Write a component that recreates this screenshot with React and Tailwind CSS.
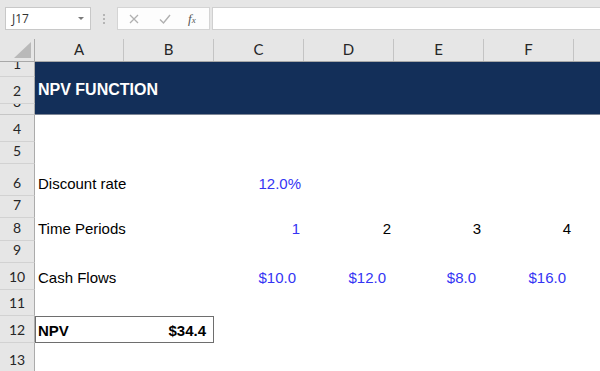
import { useState } from "react";

const COLS = ["A", "B", "C", "D", "E", "F", ""];

const ROWS = [
  { n: 1, h: "h-[15px]", banner: true },
  { n: 2, h: "h-[27px]", banner: true, title: "NPV FUNCTION" },
  { n: 3, h: "h-[11px]", banner: true, last: true },
  { n: 4, h: "h-[27px]" },
  { n: 5, h: "h-[22px]" },
  { n: 6, h: "h-[32px]", label: "Discount rate", vals: [{ t: "12.0%", blue: true, pr: "pr-[3px]" }] },
  { n: 7, h: "h-[22px]" },
  {
    n: 8,
    h: "h-[23px]",
    label: "Time Periods",
    vals: [
      { t: "1", blue: true, pr: "pr-[4px]" },
      { t: "2", pr: "pr-[3px]" },
      { t: "3", pr: "pr-[3px]" },
      { t: "4", pr: "pr-[3px]" },
    ],
  },
  { n: 9, h: "h-[22px]" },
  {
    n: 10,
    h: "h-[27px]",
    label: "Cash Flows",
    vals: [
      { t: "$10.0", blue: true, pr: "pr-[8px]" },
      { t: "$12.0", blue: true, pr: "pr-[8px]" },
      { t: "$8.0", blue: true, pr: "pr-[8px]" },
      { t: "$16.0", blue: true, pr: "pr-[8px]" },
    ],
  },
  { n: 11, h: "h-[26px]" },
  { n: 12, h: "h-[27px]", npv: true },
  { n: 13, h: "h-[30px]" },
];

function RowHead({ n, last }) {
  return (
    <div
      className={`flex items-end justify-center overflow-hidden bg-[#e6e6e6] border-r border-r-[#ababab] border-b ${
        last ? "border-b-[#c6c6c6]" : "border-b-[#d2d2d2]"
      } pb-[5px] font-['Lato',sans-serif] text-[14px] leading-none text-[#262626]`}
    >
      {n}
    </div>
  );
}

function Toolbar() {
  const [ref] = useState("J17");
  return (
    <div className="h-[39px] bg-[#e6e6e6] flex items-start pt-[7px] pl-[5px] font-['Open_Sans',sans-serif]">
      {/* name box */}
      <div className="w-[86px] h-[23px] bg-white border border-[#c8c8c8] flex items-center justify-between pl-[6px] pr-[6px]">
        <span className="text-[12px] text-[#333] leading-none">{ref}</span>
        <span className="w-0 h-0 border-l-[3px] border-r-[3px] border-t-[3px] border-l-transparent border-r-transparent border-t-[#7a7a7a]" />
      </div>
      {/* grip dots */}
      <div className="w-[26px] h-[23px] flex flex-col items-center justify-center gap-[2px]">
        <span className="w-[2px] h-[2px] bg-[#b5b5b5]" />
        <span className="w-[2px] h-[2px] bg-[#b5b5b5]" />
        <span className="w-[2px] h-[2px] bg-[#b5b5b5]" />
      </div>
      {/* cancel / enter / fx */}
      <div className="w-[93px] h-[23px] bg-[#fdfdfd] border border-[#d4d4d4] flex items-center pl-[10px] gap-[14px]">
        <svg width="12" height="12" viewBox="0 0 12 12" className="shrink-0">
          <path d="M2 2 L10 10 M10 2 L2 10" stroke="#b0b0b0" strokeWidth="1.3" fill="none" />
        </svg>
        <svg width="14" height="12" viewBox="0 0 14 12" className="shrink-0 ml-[4px]">
          <path d="M2 6.5 L5.5 10 L12 2" stroke="#b0b0b0" strokeWidth="1.4" fill="none" />
        </svg>
        <span className="font-['Liberation_Serif',serif] italic text-[13px] text-[#555] leading-none ml-[2px]">
          f<span className="text-[9px]">x</span>
        </span>
      </div>
      {/* formula input */}
      <div className="flex-1 h-[23px] ml-[2px] bg-white border border-[#d0d0d0] border-r-0" />
    </div>
  );
}

export default function App() {
  return (
    <div className="w-[600px] h-[371px] overflow-hidden bg-white font-['Liberation_Sans',Arial,sans-serif]">
      <Toolbar />

      {/* column headers */}
      <div className="grid grid-cols-[35px_89px_90px_90px_90px_90px_90px_1fr] h-[23px] bg-[#e6e6e6] border-b border-b-[#a8a8a8]">
        <div className="relative border-r border-r-[#ababab]">
          <div className="absolute right-[3px] bottom-[3px] w-0 h-0 border-l-[16px] border-t-[16px] border-l-transparent border-t-transparent border-r-0 border-b-[0px]">
          </div>
          <svg width="17" height="16" viewBox="0 0 17 16" className="absolute right-[3px] bottom-[3px]">
            <path d="M17 0 L17 16 L0 16 Z" fill="#b9b9b9" />
          </svg>
        </div>
        {COLS.map((c, i) => (
          <div
            key={i}
            className={`flex items-end justify-center pb-[4px] font-['Lato',sans-serif] text-[15px] leading-none text-[#262626] ${
              i < 6 ? "border-r border-r-[#c4c4c4]" : ""
            }`}
          >
            {c}
          </div>
        ))}
      </div>

      {/* sheet rows */}
      {ROWS.map((r) => (
        <div key={r.n} className={`grid grid-cols-[35px_89px_90px_90px_90px_90px_90px_1fr] ${r.h}`}>
          <RowHead n={r.n} last={r.last} />

          {r.banner ? (
            <div
              className={`col-span-7 bg-[#132f59] flex items-end pl-[3px] pb-[6px] overflow-hidden ${
                r.last ? "border-b border-b-[#7d8696]" : ""
              }`}
            >
              {r.title && (
                <span className="text-white font-bold text-[16px] leading-none">{r.title}</span>
              )}
            </div>
          ) : r.npv ? (
            <>
              <div className="col-span-2 border border-[#6e6e6e] flex items-end justify-between pl-[2px] pr-[7px] pb-[4px] font-bold text-[15px] leading-none text-black">
                <span>NPV</span>
                <span>$34.4</span>
              </div>
              <div className="col-span-5" />
            </>
          ) : (
            <>
              <div className="col-span-2 flex items-end pl-[3px] pb-[5px] text-[15px] leading-none text-black whitespace-nowrap">
                {r.label}
              </div>
              {[0, 1, 2, 3].map((k) => {
                const v = r.vals && r.vals[k];
                return (
                  <div
                    key={k}
                    className={`flex items-end justify-end pb-[5px] text-[15px] leading-none ${
                      v ? v.pr : ""
                    } ${v && v.blue ? "text-[#3434f4]" : "text-black"}`}
                  >
                    {v ? v.t : ""}
                  </div>
                );
              })}
              <div />
            </>
          )}
        </div>
      ))}
    </div>
  );
}
